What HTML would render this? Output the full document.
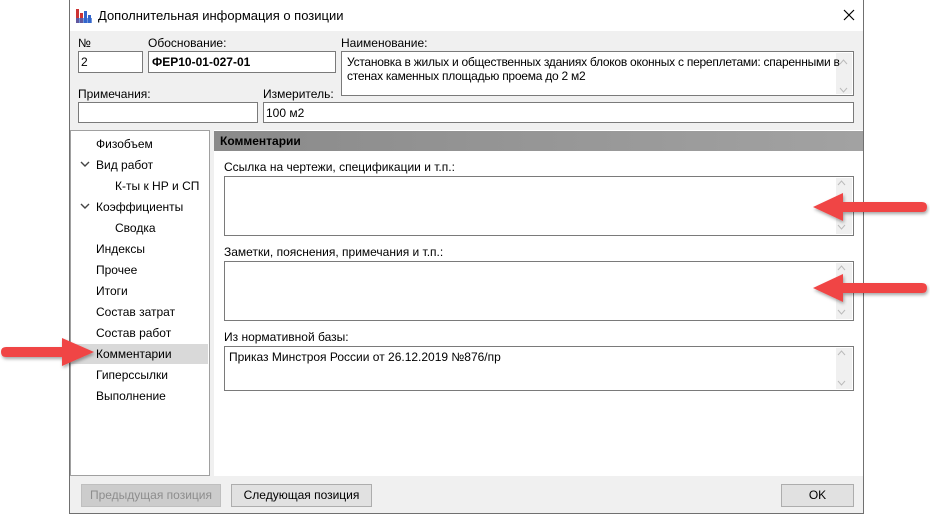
<!DOCTYPE html>
<html><head><meta charset="utf-8">
<style>
*{box-sizing:border-box;margin:0;padding:0}
body{width:930px;height:514px;background:#fff;position:relative;overflow:hidden;font-family:"Liberation Sans","DejaVu Sans",sans-serif;font-size:12px;color:#000}
.a{position:absolute}
.win{left:69px;top:0;width:795px;height:514px;border:1px solid #707070;border-top:none;background:#f0f0f0}
.title{left:70px;top:0;width:793px;height:31px;background:#fff}
.lbl{font-size:12px;white-space:nowrap}
.box{background:#fff;border:1px solid #7a7a7a}
.tree div{position:absolute;white-space:nowrap;font-size:12px}
.sb{position:absolute;right:1px;top:1px;bottom:1px;width:16px;background:#f0f0f0}
.btn{background:#e1e1e1;border:1px solid #adadad;text-align:center;line-height:21px;font-size:12px}
</style></head><body>
<div class="a win"></div>
<div class="a title"></div>
<svg class="a" style="left:76px;top:9px" width="16" height="14"><rect x="0" y="0" width="3" height="14" fill="#c33"/><rect x="4" y="4" width="3" height="10" fill="#c33"/><rect x="8" y="2" width="3" height="12" fill="#36c"/><rect x="12" y="6" width="3" height="8" fill="#36c"/><rect x="0" y="9" width="16" height="5" fill="#36c" opacity=".7"/></svg>
<div class="a lbl" style="left:98px;top:8px;font-size:13px">Дополнительная информация о позиции</div>
<svg class="a" style="left:843px;top:9px" width="12" height="12"><path d="M1 1L11 11M11 1L1 11" stroke="#000" stroke-width="1.2"/></svg>

<div class="a lbl" style="left:78px;top:36px">№</div>
<div class="a box" style="left:78px;top:51px;width:65px;height:22px"></div>
<div class="a lbl" style="left:81px;top:55px">2</div>
<div class="a lbl" style="left:148px;top:36px">Обоснование:</div>
<div class="a box" style="left:148px;top:51px;width:188px;height:22px"></div>
<div class="a lbl" style="left:152px;top:55px;font-weight:bold">ФЕР10-01-027-01</div>
<div class="a lbl" style="left:341px;top:36px">Наименование:</div>
<div class="a box" style="left:341px;top:51px;width:513px;height:45px"><div class="sb"></div>
<svg class="a" style="right:5px;top:7px" width="9" height="34"><path d="M1 5L4.5 1L8 5M1 29L4.5 33L8 29" stroke="#bbb" fill="none"/></svg></div>
<div class="a" style="left:347px;top:55px;width:500px;line-height:14px;font-size:12px;letter-spacing:-0.25px">Установка в жилых и общественных зданиях блоков оконных с переплетами: спаренными в стенах каменных площадью проема до 2 м2</div>
<div class="a lbl" style="left:78px;top:87px">Примечания:</div>
<div class="a box" style="left:78px;top:102px;width:180px;height:21px"></div>
<div class="a lbl" style="left:263px;top:87px">Измеритель:</div>
<div class="a box" style="left:263px;top:102px;width:591px;height:21px"></div>
<div class="a lbl" style="left:266px;top:106px">100 м2</div>

<div class="a" style="left:70px;top:130px;width:140px;height:346px;background:#fff;border:1px solid #a0a0a0"></div>
<div class="a" style="left:71px;top:344px;width:137px;height:20px;background:#d9d9d9"></div>
<svg class="a" style="left:80px;top:161px" width="10" height="50"><path d="M1 1L5 5L9 1M1 43L5 47L9 43" stroke="#444" stroke-width="1.4" fill="none"/></svg>
<div class="a tree" style="left:0;top:0">
<div style="left:96px;top:137px">Физобъем</div>
<div style="left:96px;top:158px">Вид работ</div>
<div style="left:115px;top:179px">К-ты к НР и СП</div>
<div style="left:96px;top:200px">Коэффициенты</div>
<div style="left:115px;top:221px">Сводка</div>
<div style="left:96px;top:242px">Индексы</div>
<div style="left:96px;top:263px">Прочее</div>
<div style="left:96px;top:284px">Итоги</div>
<div style="left:96px;top:305px">Состав затрат</div>
<div style="left:96px;top:326px">Состав работ</div>
<div style="left:96px;top:347px">Комментарии</div>
<div style="left:96px;top:368px">Гиперссылки</div>
<div style="left:96px;top:389px">Выполнение</div>
</div>

<div class="a" style="left:214px;top:130px;width:649px;height:346px;background:#fff"></div>
<div class="a" style="left:214px;top:131px;width:649px;height:20px;background:linear-gradient(to right,#8a8a8a,#a2a2a2)"></div>
<div class="a lbl" style="left:220px;top:134px;font-weight:bold">Комментарии</div>
<div class="a lbl" style="left:224px;top:160px">Ссылка на чертежи, спецификации и т.п.:</div>
<div class="a box" style="left:224px;top:176px;width:630px;height:60px"><div class="sb"></div></div>
<div class="a lbl" style="left:224px;top:245px">Заметки, пояснения, примечания и т.п.:</div>
<div class="a box" style="left:224px;top:261px;width:630px;height:60px"><div class="sb"></div></div>
<div class="a lbl" style="left:224px;top:330px">Из нормативной базы:</div>
<div class="a box" style="left:224px;top:346px;width:630px;height:45px"><div class="sb"></div></div>
<div class="a lbl" style="left:229px;top:350px">Приказ Минстроя России от 26.12.2019 №876/пр</div>
<svg class="a" style="left:837px;top:180px" width="9" height="210"><path d="M1 5L4.5 1L8 5M1 45L4.5 49L8 45M1 90L4.5 86L8 90M1 130L4.5 134L8 130M1 175L4.5 171L8 175M1 201L4.5 205L8 201" stroke="#bbb" fill="none"/></svg>

<div class="a btn" style="left:81px;top:484px;width:140px;height:23px;color:#8d8d8d;background:#cccccc;border-color:#bfbfbf">Предыдущая позиция</div>
<div class="a btn" style="left:231px;top:484px;width:141px;height:23px">Следующая позиция</div>
<div class="a btn" style="left:781px;top:484px;width:73px;height:23px">OK</div>

<svg class="a" style="left:0;top:0" width="930" height="514">
<defs><filter id="s"><feDropShadow dx="1" dy="2" stdDeviation="1.5" flood-opacity=".35"/></filter></defs>
<g fill="#f04545" filter="url(#s)">
<path d="M813 207L843 193L843 202L922 202Q927 202 927 207Q927 212 922 212L843 212L843 221Z"/>
<path d="M813 288L843 274L843 283L922 283Q927 283 927 288Q927 293 922 293L843 293L843 302Z"/>
<path d="M94 352L62 338L62 347L6 347Q1 347 1 352Q1 357 6 357L62 357L62 366Z"/>
</g></svg>
</body></html>
